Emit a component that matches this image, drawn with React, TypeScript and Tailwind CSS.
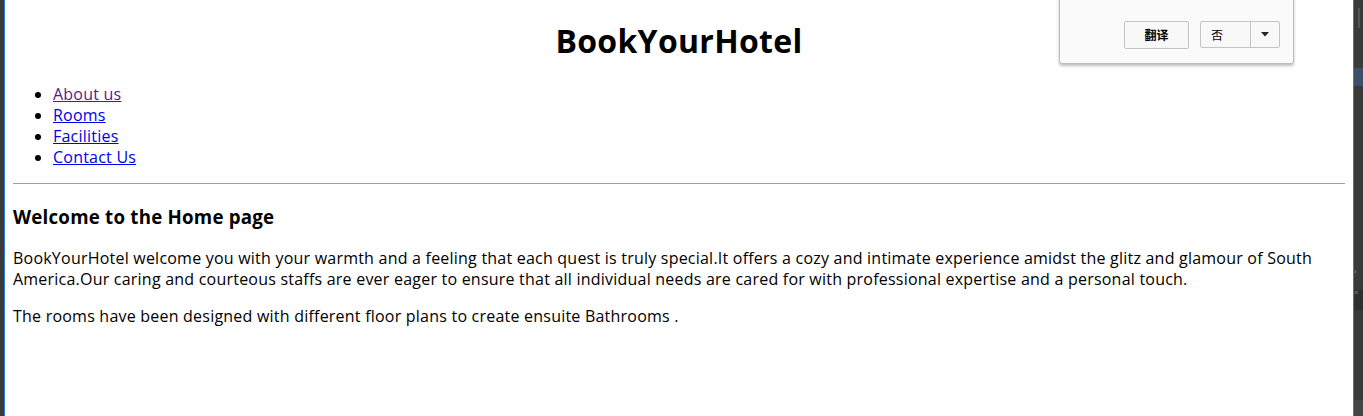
import React from "react";

const links = [
  { label: "About us", visited: true },
  { label: "Rooms", visited: false },
  { label: "Facilities", visited: false },
  { label: "Contact Us", visited: false },
];

function TranslateBar() {
  return (
    <div className="absolute right-[59px] -top-[4px] h-[68px] w-[235px] rounded-b-[3px] border border-[#bdbdbd] bg-[#fafafa] shadow-[0_2px_3px_rgba(0,0,0,0.25)]">
      <div className="flex items-start gap-[11px] pl-[64px] pt-[24px] font-['Noto_Sans_CJK_SC',sans-serif] text-[12px] tracking-normal text-black">
        <button className="flex h-[28px] w-[65px] items-center justify-center rounded-[2px] border border-[#c4c4c4] bg-[#f8f8f8] font-bold">
          翻译
        </button>
        <div className="flex h-[27px] w-[80px] rounded-[2px] border border-[#c4c4c4] bg-[#f8f8f8]">
          <span className="flex w-[49px] items-center pl-[10px]">否</span>
          <span className="flex flex-1 items-center justify-center border-l border-[#c4c4c4]">
            <svg width="8" height="5" viewBox="0 0 8 5">
              <path d="M0 0h8L4 4.5z" fill="#222" />
            </svg>
          </span>
        </div>
      </div>
    </div>
  );
}

function RightStrip() {
  return (
    <div className="flex w-[9px] flex-col bg-[#3a3a3a]">
      <div className="h-[8px]" />
      <div className="ml-[4px] h-[20px] w-[2px] bg-[#555]" />
      <div className="h-[40px]" />
      <div className="h-[18px] bg-[#3b5068]" />
      <div className="h-[178px]" />
      <div className="flex h-[14px] items-center text-[8px] leading-none text-[#888]">›</div>
      <div className="h-[12px]" />
      <div className="h-[20px] bg-[#2f2f2f] text-[7px] leading-[6px] text-[#888]">≡</div>
      <div className="flex-1" />
      <div className="h-[16px] bg-[#454545]" />
    </div>
  );
}

export default function App() {
  return (
    <div className="flex h-[416px] w-full overflow-hidden bg-[#3a3a3a]">
      <div className="w-[4px] bg-[#3a3a3a]" />
      <div className="w-[1px] bg-[#2b7fd6]" />

      <main className="relative flex-1 bg-white px-[8px] font-['Open_Sans',sans-serif] text-[16px] tracking-[0.22px] text-black">
        <TranslateBar />

        <h1 className="mt-[20px] text-center text-[32px] font-bold leading-[42px] tracking-[0.3px]">BookYourHotel</h1>

        <ul className="mt-[22px] list-disc pl-[40px] leading-[21px]">
          {links.map((l) => (
            <li key={l.label}>
              <a href="#" className={l.visited ? "text-[#551a8b] underline" : "text-[#0000ee] underline"}>
                {l.label}
              </a>
            </li>
          ))}
        </ul>

        <hr className="mt-[15px] border-t border-[#a0a0a0]" />

        <h3 className="mt-[20px] text-[18.72px] font-bold leading-[25px]">Welcome to the Home page</h3>

        <p className="mt-[19px] leading-[21px]">
          BookYourHotel welcome you with your warmth and a feeling that each quest is truly special.It offers a cozy and intimate experience amidst the glitz and glamour of South America.Our caring and courteous staffs are ever eager to ensure that all individual needs are cared for with professional expertise and a personal touch.
        </p>

        <p className="mt-[16px] leading-[21px]">
          The rooms have been designed with different floor plans to create ensuite Bathrooms .
        </p>
      </main>

      <div className="w-[1px] bg-[#2b7fd6]" />
      <RightStrip />
    </div>
  );
}
